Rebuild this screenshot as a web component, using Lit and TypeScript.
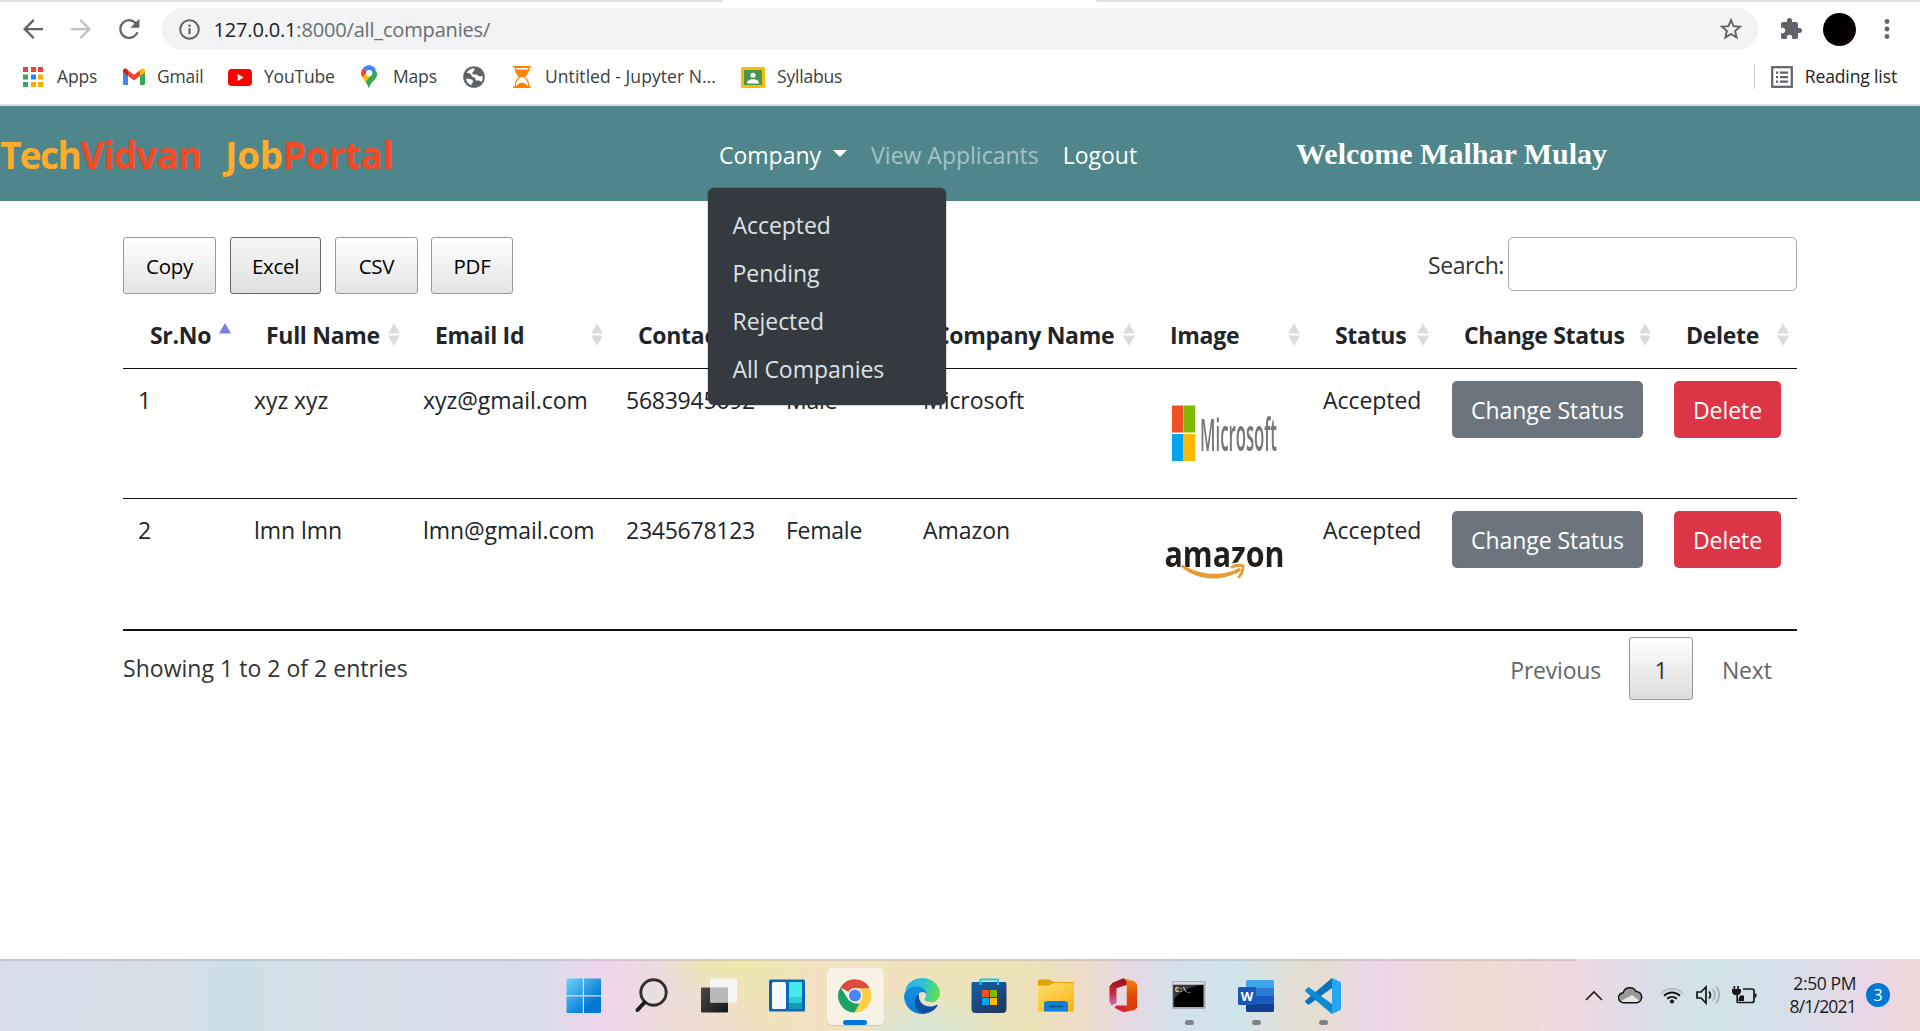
import { LitElement, html, svg, css } from "lit";
import { customElement } from "lit/decorators.js";
import { classMap } from "lit/directives/class-map.js";

interface Company {
  no: number;
  name: string;
  email: string;
  contact: string;
  gender: string;
  company: string;
  status: string;
  logo: unknown;
}

const backIcon = svg`<svg class="nav-icon" viewBox="0 0 24 24" fill="#5f6368"><path d="M20 11.1H7.6l5.7-5.7L12 4l-8 8 8 8 1.3-1.3-5.7-5.8H20z"/></svg>`;
const forwardIcon = svg`<svg class="nav-icon" viewBox="0 0 24 24" fill="#bdc1c6"><path d="M4 11.1h12.4l-5.7-5.7L12 4l8 8-8 8-1.3-1.3 5.7-5.8H4z"/></svg>`;
const reloadIcon = svg`<svg class="nav-icon" viewBox="0 0 24 24" fill="#5f6368"><path d="M17.65 6.35A7.96 7.96 0 0 0 12 4a8 8 0 1 0 7.7 10.6h-1.95A6.2 6.2 0 1 1 12 5.8c1.7 0 3.2.7 4.3 1.9L13 11h7.3V3.7z"/></svg>`;

const bookmarks = [
  {
    label: "Apps",
    icon: svg`<svg width="22" height="22" viewBox="0 0 22 22">
      <path fill="#ea4335" d="M0 1h5v5H0zM8 1h5v5H8zM15 1h5v5h-5z"/>
      <path fill="#34a853" d="M0 8.500h5v5H0zM0 16h5v5H0z"/>
      <path fill="#1a8cff" d="M8 8.500h5v5H8z"/>
      <path fill="#fbab0a" d="M15 8.500h5v5h-5zM8 16h5v5H8zM15 16h5v5h-5z"/></svg>`,
  },
  {
    label: "Gmail",
    icon: svg`<svg width="22" height="18" viewBox="0 0 22 18">
      <path fill="#4285f4" d="M0 4v11.500A1.500 1.500 0 0 0 1.500 17H5V7.500z"/>
      <path fill="#34a853" d="M22 4v11.500a1.500 1.500 0 0 1-1.500 1.500H17V7.500z"/>
      <path fill="#ea4335" d="M5 2.200l6 4.600 6-4.600V8l-6 4.500L5 8z"/>
      <path fill="#c5221f" d="M0 2.800C0 .8 2.200-.1 3.700 1L5 2.200V8L0 4.300z"/>
      <path fill="#fbbc04" d="M22 2.800C22 .8 19.800-.1 18.300 1L17 2.200V8l5-3.700z"/></svg>`,
  },
  {
    label: "YouTube",
    icon: svg`<svg width="24" height="17" viewBox="0 0 24 17"><rect width="24" height="17" rx="3.800" fill="#f00"/><path fill="#fff" d="M9.700 5l6 3.500-6 3.500z"/></svg>`,
  },
  {
    label: "Maps",
    icon: svg`<svg width="20" height="24" viewBox="0 0 20 24">
      <path fill="#34a853" d="M8 23.500c-.5 0-.8-3.200-3.600-6.700L14 4.500A8.300 8.300 0 0 1 16.200 8.700c0 6.300-7.200 8-8.200 14.800z"/>
      <path fill="#fbbc04" d="M4.400 16.800C2.700 14.600 1 12.600.4 10.300L6 6l4.800 4z"/>
      <path fill="#ea4335" d="M.4 10.300C-.3 7.500.4 4.800 2.200 2.900L6.200 6.400 1.800 11.700z"/>
      <path fill="#4285f4" d="M8 .2c2.700 0 5 1.400 6.700 3.700L10.700 9 6.200 6.400l-4-3.500C3.700 1.200 5.700.2 8 .2z"/>
      <circle cx="8.200" cy="8.200" r="3.100" fill="#fff"/></svg>`,
  },
  {
    label: "",
    icon: svg`<svg width="22" height="22" viewBox="0 0 22 22"><circle cx="11" cy="11" r="10.800" fill="#5f6368"/>
      <path fill="#fff" d="M11.500 2.400c-3.500-.2-6.500 1.700-8 4.600 1.700-.2 3.300.1 4.300 1.100 1 1.100.5 2.600 2 2.900 1.700.3 2.700.6 2.700 2.400 0 1.400 1.200 1.200 2.700 1.200 1.300 0 2.300.6 3 1.400 1.300-1.700 1.800-3.800 1.400-6-1.600-.1-2.400.9-3.700 0-1.300-.8-2.400-1.600-4.200-1.400-1.400.2-2.400-.5-2.300-1.700.1-1.600 2.500-1.400 2.100-4.500zM3 12.500c.4 3 2.400 5.800 5.600 6.800l.1-2.200c1.200-.3 1.700-1.200 1.300-2.300-.4-1.200-2-1.800-3.700-1.900z"/></svg>`,
  },
  {
    label: "Untitled - Jupyter N...",
    icon: svg`<svg width="20" height="22" viewBox="0 0 20 22">
      <path fill="#ff8000" d="M0 0h18v1.600H0zM0 20.400h18V22H0z"/>
      <path fill="#fff" stroke="#ff8000" stroke-width="1.200" d="M2.300 1.500c0 5 1.200 7.300 4.800 9.500-3.600 2.200-4.800 4.500-4.800 9.500h13.400c0-5-1.200-7.300-4.800-9.500 3.600-2.200 4.800-4.500 4.800-9.500z"/>
      <path fill="#ff8000" d="M3 3.500h12c-.5 3.700-2 5.700-5 7.500H8C5 9.200 3.500 7.200 3 3.500zM3.200 20.300c1.500-2.200 3-3.500 5.800-3.500s4.300 1.300 5.800 3.500z"/></svg>`,
  },
  {
    label: "Syllabus",
    icon: svg`<svg width="24" height="21" viewBox="0 0 24 21"><rect width="24" height="21" rx="1.500" fill="#fbbc04"/>
      <rect x="3" y="3" width="18" height="15" fill="#4a9550"/><circle cx="12" cy="8.200" r="2.500" fill="#fff"/>
      <path fill="#fff" d="M6 16.500c0-3 3-4.300 6-4.300s6 1.300 6 4.300z"/></svg>`,
  },
];

const microsoftLogo = svg`<svg class="logo" viewBox="0 0 135 104">
  <rect x="14" y="24.500" width="11.500" height="27" fill="#f25022"/><rect x="26" y="24.500" width="11.300" height="27" fill="#7fba00"/>
  <rect x="14" y="53" width="11.500" height="27" fill="#00a4ef"/><rect x="26" y="53" width="11.300" height="27" fill="#ffb900"/>
  <text class="ms-name" x="42" y="69.500" textLength="77" lengthAdjust="spacingAndGlyphs">Microsoft</text></svg>`;

const amazonLogo = svg`<svg class="logo" viewBox="0 0 135 104">
  <text class="amazon-name" x="6.500" y="56" textLength="120" lengthAdjust="spacingAndGlyphs">amazon</text>
  <path d="M23 55.500c16 15 44 16 60 3l-2-1.500c-15 8.500-39 8-56.500-3.500z" fill="#ea9a33"/>
  <path d="M72 56.500c4-2.500 9-3 13-2 .5 4-1.500 9-5 12.500" fill="none" stroke="#fff" stroke-width="5.500"/>
  <path d="M73 56.500c4-2.300 8.500-2.600 12-1.700.3 4-1.500 8.500-4.800 12" fill="none" stroke="#ea9a33" stroke-width="2.800"/>
  <path d="M76 61.500l6-4.500 1 2.500-5 3.500z" fill="#ea9a33"/></svg>`;

const companies: Company[] = [
  { no: 1, name: "xyz xyz", email: "xyz@gmail.com", contact: "5683945692", gender: "Male", company: "Microsoft", status: "Accepted", logo: microsoftLogo },
  { no: 2, name: "lmn lmn", email: "lmn@gmail.com", contact: "2345678123", gender: "Female", company: "Amazon", status: "Accepted", logo: amazonLogo },
];

const columns = ["Sr.No", "Full Name", "Email Id", "Contact", "Gender", "Company Name", "Image", "Status", "Change Status", "Delete"];

@customElement("browser-chrome")
class BrowserChrome extends LitElement {
  static styles = css`
    :host { display: block; background: #fff; border-bottom: 2px solid #dadce0; font-family: "Open Sans", "Noto Sans", sans-serif; }
    svg { display: block; flex: none; }
    .tabs { display: flex; justify-content: space-between; height: 2px; }
    .tab-edge { background: #dee1e6; }
    .tab-edge.left { width: 723px; border-bottom-right-radius: 2px; }
    .tab-edge.right { width: 824px; border-bottom-left-radius: 2px; }
    .toolbar { display: flex; align-items: center; height: 54px; padding-left: 18px; gap: 18px; }
    .nav-icon { width: 30px; height: 30px; }
    .address { display: flex; align-items: center; width: 1596px; height: 42px; padding: 0 15px 0 17px; box-sizing: border-box; border-radius: 21px; background: #f1f3f4; }
    .url { flex: 1; margin-left: 13.5px; padding-top: 1px; font-size: 20px; letter-spacing: -0.17px; line-height: 30px; color: #6a6e72; white-space: nowrap; }
    .host { color: #202124; }
    .actions { display: flex; align-items: center; margin-left: 3px; }
    .avatar { width: 33px; height: 33px; margin: 0 19px 0 20px; border-radius: 50%; background: linear-gradient(135deg, #000 55%, #190004); }
    .bookmarks { display: flex; align-items: center; height: 42px; padding: 0 23px 6px 23px; }
    .list { display: grid; grid-template-columns: 100px 105px 133px 102px 50px 228px auto; align-items: center; flex: 1; }
    .bookmark { display: flex; align-items: center; gap: 12px; }
    .label { font-size: 17.5px; line-height: 24px; letter-spacing: -0.18px; color: #3c4043; white-space: nowrap; padding-bottom: 2px; }
    .label.wide { letter-spacing: 0.05px; }
    .reading { display: flex; align-items: center; height: 24px; padding-left: 16px; gap: 12px; border-left: 1px solid #ccc; }
    .reading .label { color: #202124; letter-spacing: -0.12px; }
  `;

  render() {
    return html`
      <div class="tabs"><div class="tab-edge left"></div><div class="tab-edge right"></div></div>
      <div class="toolbar">
        ${backIcon}${forwardIcon}${reloadIcon}
        <div class="address">
          <svg width="21" height="21" viewBox="0 0 21 21"><circle cx="10.500" cy="10.500" r="9.300" fill="none" stroke="#5f6368" stroke-width="2"/><path fill="#5f6368" d="M9.400 9.300h2.200v6H9.400zM9.400 5.500h2.200v2.200H9.400z"/></svg>
          <span class="url"><span class="host">127.0.0.1</span>:8000/all_companies/</span>
          <svg width="24" height="24" viewBox="0 0 24 24"><path fill="none" stroke="#5f6368" stroke-width="1.900" d="M12 3.200l2.500 6 6.500.6-4.900 4.200 1.500 6.400L12 17l-5.600 3.400L7.900 14 3 9.800l6.500-.6z"/></svg>
        </div>
        <div class="actions">
          <svg width="24" height="24" viewBox="0 0 24 24" fill="#5f6368"><path d="M20.500 11H19V7c0-1.100-.9-2-2-2h-4V3.500a2.500 2.500 0 0 0-5 0V5H4c-1.100 0-2 .9-2 2v3.800h1.500a2.700 2.700 0 0 1 0 5.400H2V20c0 1.100.9 2 2 2h3.800v-1.500a2.700 2.700 0 0 1 5.400 0V22H17c1.100 0 2-.9 2-2v-4h1.500a2.500 2.500 0 0 0 0-5z"/></svg>
          <div class="avatar"></div>
          <svg width="24" height="24" viewBox="0 0 24 24" fill="#5f6368"><circle cx="12" cy="4.500" r="2.400"/><circle cx="12" cy="12" r="2.400"/><circle cx="12" cy="19.500" r="2.400"/></svg>
        </div>
      </div>
      <div class="bookmarks">
        <div class="list">
          ${bookmarks.map((b) => html`<div class="bookmark">${b.icon}${b.label ? html`<span class=${classMap({ label: true, wide: b.label.length > 12 })}>${b.label}</span>` : null}</div>`)}
        </div>
        <div class="reading">
          <svg width="22" height="22" viewBox="0 0 22 22"><rect x="1.200" y="1.200" width="19.600" height="19.600" fill="none" stroke="#5f6368" stroke-width="2.200"/>
            <path fill="#5f6368" d="M5 5.500h2.200v2.200H5zM9 5.500h8v2.200H9zM5 10h2.200v2.200H5zM9 10h8v2.200H9zM5 14.500h2.200v2.200H5zM9 14.500h8v2.200H9z"/></svg>
          <span class="label">Reading list</span>
        </div>
      </div>
    `;
  }
}

@customElement("portal-navbar")
class PortalNavbar extends LitElement {
  static styles = css`
    :host { display: grid; grid-template-columns: 708px 588px 1fr; align-items: center; height: 95px; background: #4f868b; font-family: "Open Sans", "Noto Sans", sans-serif; }
    .brand { display: flex; gap: 24px; padding-top: 2px; font-size: 37px; line-height: 50px; font-weight: 700; white-space: nowrap; color: #ffac2d; letter-spacing: -0.4px; }
    .tech { letter-spacing: -1.6px; }
    .accent { color: #f34b26; letter-spacing: -0.3px; }
    .vidvan { letter-spacing: -0.9px; }
    .links { display: flex; gap: 24px; padding-left: 11px; padding-top: 2px; font-size: 23px; line-height: 36px; letter-spacing: 0; color: #fff; white-space: nowrap; }
    .dropdown { position: relative; display: flex; align-items: center; gap: 12px; }
    .caret { border: 7px solid transparent; border-top-color: #fff; border-bottom: 0; margin-bottom: 3px; }
    .muted { color: rgba(255, 255, 255, 0.5); }
    .menu { position: absolute; top: 51px; left: -11px; z-index: 2; width: 238px; padding: 13px 0 12px; box-sizing: border-box; border-radius: 6px; background: #343a40; box-shadow: 0 0 0 1px rgba(0, 0, 0, 0.15); }
    .item { padding: 0 24.5px; line-height: 48px; color: #dee2e6; letter-spacing: -0.05px; }
    .welcome { font: 700 30px/40px "Liberation Serif", serif; color: #fff; white-space: nowrap; }
  `;

  render() {
    return html`
      <div class="brand">
        <span><span class="tech">Tech</span><span class="accent vidvan">Vidvan</span></span>
        <span>Job<span class="accent">Portal</span></span>
      </div>
      <div class="links">
        <div class="dropdown">
          <span>Company</span><span class="caret"></span>
          <div class="menu">
            ${["Accepted", "Pending", "Rejected", "All Companies"].map((t) => html`<div class="item">${t}</div>`)}
          </div>
        </div>
        <span class="muted">View Applicants</span>
        <span>Logout</span>
      </div>
      <div class="welcome">Welcome Malhar Mulay</div>
    `;
  }
}

@customElement("company-table")
class CompanyTable extends LitElement {
  static styles = css`
    :host { display: block; padding: 36px 123px 0; font: 23px/36px "Open Sans", "Noto Sans", sans-serif; letter-spacing: -0.05px; color: #212529; }
    svg { display: block; }
    .tools { display: flex; height: 57px; }
    .export { height: 57px; margin-right: 14px; box-sizing: border-box; border: 1px solid #999; border-radius: 3px; background: linear-gradient(#fff, #e4e4e4); font-size: 20.5px; line-height: 56px; text-align: center; color: #000; letter-spacing: -0.3px; }
    .export.copy { width: 93px; }
    .export.excel { width: 91px; border-color: #666; background: linear-gradient(#f6f6f6, #e0e0e0); }
    .export.csv { width: 83px; margin-right: 13px; }
    .export.pdf { width: 82px; }
    .search { display: flex; align-items: flex-start; gap: 4px; margin-left: auto; line-height: 57px; color: #333; letter-spacing: -0.4px; }
    .field { width: 289px; height: 54px; box-sizing: border-box; border: 1px solid #aaa; border-radius: 5px; }
    .row { display: grid; grid-template-columns: 116px 169px 203px 160px 137px 235px 165px 129px 222px 138px; white-space: nowrap; }
    .head { height: 75px; box-sizing: border-box; border-bottom: 1px solid #111; font-weight: 700; letter-spacing: -0.3px; }
    .title { display: flex; justify-content: space-between; padding: 23px 8.5px 0 27px; }
    .title svg { margin-top: 6px; }
    .body { height: 129px; }
    .body + .body { height: 131px; box-sizing: border-box; border-top: 1px solid #111; }
    .last { border-bottom: 2px solid #111; }
    .cell { padding: 13px 15px 0; }
    .tight { letter-spacing: -0.25px; }
    .media { padding-top: 12px; }
    .logo { width: 135px; height: 104px; filter: blur(0.4px); }
    .ms-name { font: 600 46px "Open Sans", sans-serif; fill: #777; }
    .amazon-name { font: 700 36px "Open Sans", sans-serif; fill: #221f1a; }
    .btn { height: 57px; border-radius: 5px; font-size: 23px; line-height: 59px; text-align: center; color: #fff; }
    .btn.change { width: 191px; background: #6c757d; }
    .btn.delete { width: 107px; background: #dc3545; }
    .foot { display: flex; justify-content: space-between; color: #333; }
    .info { padding-top: 19px; letter-spacing: 0.03px; }
    .pages { display: flex; align-items: flex-start; padding-top: 6px; line-height: 67px; color: #666; letter-spacing: -0.2px; }
    .page { width: 64px; height: 63px; margin: 0 29px 0 28px; box-sizing: border-box; border: 1px solid #979797; border-radius: 3px; background: linear-gradient(#fff, #dcdcdc); text-align: center; color: #333; line-height: 65px; }
    .next { width: 75px; }
  `;

  private sorter(active: boolean) {
    return active
      ? html`<svg width="12" height="23" viewBox="0 0 12 23"><path fill="#7b80e0" d="M6 0l6 10.500H0z"/></svg>`
      : html`<svg width="12" height="23" viewBox="0 0 12 23"><path fill="#dcdcdc" d="M6 0l6 10.500H0zM6 23l6-10.500H0z"/></svg>`;
  }

  render() {
    return html`
      <div class="tools">
        ${["Copy", "Excel", "CSV", "PDF"].map((t) => html`<div class=${classMap({ export: true, [t.toLowerCase()]: true })}>${t}</div>`)}
        <div class="search"><span>Search:</span><div class="field"></div></div>
      </div>
      <div class="row head">
        ${columns.map((c, i) => html`<div class="title"><span>${c}</span>${this.sorter(i === 0)}</div>`)}
      </div>
      <div class="last">
        ${companies.map(
          (c) => html`<div class="row body">
            <div class="cell">${c.no}</div>
            <div class="cell">${c.name}</div>
            <div class="cell">${c.email}</div>
            <div class="cell tight">${c.contact}</div>
            <div class="cell tight">${c.gender}</div>
            <div class="cell">${c.company}</div>
            <div class="cell media">${c.logo}</div>
            <div class="cell">${c.status}</div>
            <div class="cell media"><div class="btn change">Change Status</div></div>
            <div class="cell media"><div class="btn delete">Delete</div></div>
          </div>`,
        )}
      </div>
      <div class="foot">
        <div class="info">Showing 1 to 2 of 2 entries</div>
        <div class="pages"><span>Previous</span><div class="page">1</div><span class="next">Next</span></div>
      </div>
    `;
  }
}

const taskIcons = [
  { name: "start", running: false, icon: svg`<svg viewBox="0 0 36 36">
      <defs><linearGradient id="s" gradientUnits="userSpaceOnUse" x1="0" y1="0" x2="35" y2="35"><stop offset="0" stop-color="#6fd6ff"/><stop offset=".75" stop-color="#0078d4"/></linearGradient></defs>
      <path fill="url(#s)" d="M1.500.500h15.300v16.800H.500V1.500a1 1 0 0 1 1-1zM18 .500h16a1 1 0 0 1 1 1v15.800H18zM.500 18.500h16.300V35H1.500a1 1 0 0 1-1-1zM18 18.500h17V34a1 1 0 0 1-1 1H18z"/></svg>` },
  { name: "search", running: false, icon: svg`<svg viewBox="0 0 36 36"><circle cx="20.500" cy="14.500" r="12.700" fill="#e9dfe0" stroke="#2f2f2f" stroke-width="2.900"/><path d="M11.500 24.500L4.500 32" stroke="#1c1c1c" stroke-width="4" stroke-linecap="round"/></svg>` },
  { name: "taskview", running: false, icon: svg`<svg viewBox="0 0 36 36">
      <defs><linearGradient id="d" x1="0" y1="0" x2="1" y2="1"><stop offset="0" stop-color="#4b4b4b"/><stop offset="1" stop-color="#151515"/></linearGradient></defs>
      <rect y="9.500" width="27" height="25" rx="1" fill="url(#d)"/><rect x="9" y=".500" width="27" height="24" rx="1" fill="#f7f7f7"/><path fill="#b9b9b9" d="M9 9.500h18v15H9z"/></svg>` },
  { name: "widgets", running: false, icon: svg`<svg viewBox="0 0 36 36"><rect y="1.500" width="36" height="32" rx="1.500" fill="#0a66b7"/><rect x="3" y="4" width="14" height="27" rx="1.500" fill="#f6f9fc"/>
      <path fill="#45eaec" d="M20 4h13v15H20z"/><path fill="#2cccd8" d="M20 19h13v6H20z"/><path fill="#139bb3" d="M20 25h13v6H20z"/></svg>` },
  { name: "chrome", running: false, icon: svg`<svg viewBox="0 0 36 36">
      <path fill="#dc4b3e" d="M18 17.500L3.500 9.600a16.600 16.600 0 0 1 29.300.9H18z"/>
      <path fill="#ffcd41" d="M18 10.500h14.800A16.600 16.600 0 0 1 17.500 34.500L25 21z"/>
      <path fill="#1da261" d="M3.600 9.200L11.600 22 18 25.500h4.500l-5 9A16.600 16.600 0 0 1 3.600 9.200z"/>
      <circle cx="18" cy="17.500" r="7.600" fill="#f1f1f1"/><circle cx="18" cy="17.500" r="6" fill="#4b86f5"/></svg>` },
  { name: "edge", running: false, icon: svg`<svg viewBox="0 0 36 36">
      <defs><linearGradient id="e1" x1="0" y1=".3" x2="1" y2=".5"><stop offset="0" stop-color="#2aaef0"/><stop offset=".5" stop-color="#2bc3d2"/><stop offset="1" stop-color="#66e04f"/></linearGradient>
      <linearGradient id="e2" x1="0" y1="0" x2="0" y2="1"><stop offset="0" stop-color="#1490df"/><stop offset="1" stop-color="#0a7bd8"/></linearGradient></defs>
      <path fill="url(#e1)" d="M.8 13C3 5 10 0 18.200 0 28.500 0 36 7.200 36 15.500c0 5-3.700 8.800-8.700 8.800-4.800 0-6.700-1.700-6.700-3.200 0-1 1.600-1.600 1.600-4.600 0-3.500-4-7-9.700-7C7 9.500 2.500 11 .8 13z"/>
      <path fill="url(#e2)" d="M.1 19.500C-.5 12 6.500 8.300 12.500 8.300c6 0 10.300 4 9.900 8.700-.3-1.800-2-3-4.200-3-3 0-5.200 3-5.200 6.500 0 7 5 12 11.500 13-2 1.500-4.500 2.400-7 2.400C8 35.800.700 28.500.1 19.500z"/>
      <path fill="#124f9f" d="M15 16c-2.500 1.200-4 4.500-4 8 0 5 3.500 10.500 8.500 11.700 6.500-.2 11.500-3.900 13.900-7.800.5-.9-.2-1.400-1-.9-1.800.9-4 1.500-6.200 1.500C19 28.500 14 23 15 16z"/></svg>` },
  { name: "store", running: false, icon: svg`<svg viewBox="0 0 36 36">
      <defs><linearGradient id="b" x1="0" y1="0" x2=".6" y2="1"><stop offset="0" stop-color="#0f62ad"/><stop offset="1" stop-color="#213a63"/></linearGradient></defs>
      <path fill="url(#b)" d="M.5 5.500A1.500 1.500 0 0 1 2 4h32a1.500 1.500 0 0 1 1.500 1.500V31a4 4 0 0 1-4 4h-27a4 4 0 0 1-4-4z"/>
      <path fill="none" stroke="#1cc4f5" stroke-width="2" d="M9.500 7V1.500h17.500V7"/>
      <path fill="#f25022" d="M11 12h7v7h-7z"/><path fill="#7fba00" d="M19 12h7v7h-7z"/><path fill="#00a4ef" d="M11 20h7v7h-7z"/><path fill="#ffb900" d="M19 20h7v7h-7z"/></svg>` },
  { name: "files", running: false, icon: svg`<svg viewBox="0 0 36 36">
      <defs><linearGradient id="f" x1="0" y1="0" x2=".7" y2="1"><stop offset="0" stop-color="#ffdf70"/><stop offset="1" stop-color="#fbb716"/></linearGradient></defs>
      <path fill="#e0a106" d="M0 3a1.500 1.500 0 0 1 1.500-1.500h10L15.500 4H35a1 1 0 0 1 1 1v6H0z"/><path fill="url(#f)" d="M0 7.500h11L16 5h20v27.500a1 1 0 0 1-1 1H1a1 1 0 0 1-1-1z"/>
      <path fill="#1080d4" d="M6 33.500V26a3 3 0 0 1 3-3h18a3 3 0 0 1 3 3v7.500z"/><path stroke="#0a5396" stroke-width="1.600" d="M11 28.500h14"/></svg>` },
  { name: "office", running: false, icon: svg`<svg viewBox="0 0 36 36">
      <defs><linearGradient id="o" x1="0" y1="0" x2="0" y2="1"><stop offset="0" stop-color="#f08a10"/><stop offset=".5" stop-color="#e04a08"/><stop offset="1" stop-color="#d63a05"/></linearGradient>
      <linearGradient id="p" x1="0" y1="0" x2="0" y2="1"><stop offset="0" stop-color="#8f1016"/><stop offset=".5" stop-color="#c52638"/><stop offset="1" stop-color="#c96ab8"/></linearGradient></defs>
      <path fill="url(#o)" d="M18.500.300L29.500 3.300 32 6v24l-2.500 2-11 2.300 3.300-4.500V6z"/>
      <path fill="url(#p)" d="M18.500.3L7.500 4.700 4.500 8.500v15l2 4 5-2.500V10.300L21.800 7V4z"/><path fill="#d91e36" d="M9.500 29.800L11 27.500h10.800v4l-3.300 2.800z"/></svg>` },
  { name: "cmd", running: true, icon: svg`<svg viewBox="0 0 36 36"><rect x="1" y="3" width="33.500" height="28" rx="1" fill="#a9adb8"/><path fill="#d8dbe2" d="M2 4h31v2H2z"/><path fill="#000" d="M2.500 7h30v22h-30z"/>
      <path fill="#3c3c3c" d="M2.500 7h27C20 9 8 13 2.500 22z"/><text class="prompt" x="4" y="14">C:\\_</text></svg>` },
  { name: "word", running: true, icon: svg`<svg viewBox="0 0 36 36"><path fill="#41a5ee" d="M9 2h25.500A1.500 1.500 0 0 1 36 3.500V10H8V3.500z"/><path fill="#2b7cd3" d="M8 10h28v8H8z"/><path fill="#185abd" d="M8 18h28v8H8z"/><path fill="#103f91" d="M8 26h28v6.500a1.500 1.500 0 0 1-1.500 1.500h-25A1.500 1.500 0 0 1 8 32.500z"/>
      <rect x="0" y="9" width="18" height="18" rx="1.500" fill="#1a56b8"/><text class="word" x="9" y="22.500" text-anchor="middle">W</text></svg>` },
  { name: "vscode", running: true, icon: svg`<svg viewBox="0 0 36 36"><path fill="#0c70b8" d="M27 0v10L3.500 27 .7 24.500a1.500 1.500 0 0 1 0-2.300z"/><path fill="#0b8ad6" d="M27 36V26L3.500 9 .7 11.500a1.500 1.500 0 0 0 0 2.300z"/><path fill="#26a5f2" d="M27 0l8 3.700a1.600 1.600 0 0 1 1 1.400v25.800a1.600 1.600 0 0 1-1 1.400L27 36l-1.500-1 1.500-1z"/></svg>` },
];

@customElement("task-bar")
class TaskBar extends LitElement {
  static styles = css`
    :host {
      display: flex; box-sizing: border-box; height: 72px; font-family: "Open Sans", "Noto Sans", sans-serif;
      background:
        radial-gradient(90px 40px at 925px 70px, #d6e8d8, transparent),
        radial-gradient(80px 50px at 735px 0, #efe7a8, transparent),
        radial-gradient(70px 45px at 700px 72px, #efdcd0, transparent),
        linear-gradient(90deg, #d8dde9 0, #d6dfe8 180px, #cbe0e6 225px, #d5dfe8 330px, #dadcea 540px, #efd6ec 600px, #ecdcd8 690px, #efe3bc 750px, #f2e1c4 840px, #eee2b8 960px, #ece2b8 1030px, #eedccb 1090px, #e6d8e6 1130px, #d2e2ea 1180px, #d0e4ec 1240px, #e2dfd2 1290px, #e6dcd2 1330px, #edd6ec 1370px, #eedccf 1470px, #efd8e2 1580px, #dcdce8 1640px, #cee4e8 1700px, #d8dfea 1800px, #ead6e6 1870px, #f0d8d8 1920px);
    }
    svg { display: block; flex: none; }
    .apps { display: flex; align-items: flex-start; width: 1576px; box-sizing: border-box; padding: 7px 0 0 555px; border-top: 2px solid rgba(120, 120, 130, 0.2); gap: 9.8px; }
    .app { display: flex; flex-direction: column; align-items: center; justify-content: space-between; width: 57px; height: 57px; padding-top: 10px; box-sizing: border-box; border-radius: 5px; }
    .app:nth-child(-n + 4) { margin-right: 1.2px; }
    .app svg { width: 36px; height: 36px; }
    .active { background: rgba(250, 247, 240, 0.75); box-shadow: 0 1px 1px rgba(0, 0, 0, 0.12); }
    .mark { width: 9px; height: 5px; border-radius: 3px; background: #7f8287; }
    .active .mark { width: 24px; background: #0078d7; }
    .prompt { font: 700 6.500px "Liberation Mono", monospace; fill: #eee; }
    .word { font: 700 13px "Open Sans", sans-serif; fill: #fff; }
    .tray { display: flex; align-items: center; padding-left: 9px; }
    .chevron { margin-right: 15px; }
    .cloud { margin-right: 17px; }
    .wifi { margin-right: 12px; }
    .volume { margin-right: 11px; }
    .battery { margin-right: 15px; }
    .clock { width: 84px; text-align: right; font-size: 17.5px; line-height: 23px; letter-spacing: -0.4px; color: #1a1a1a; white-space: nowrap; }
    .clock .date { letter-spacing: -0.8px; }
    .badge { width: 24px; height: 24px; margin-left: 10px; border-radius: 50%; background: #0078d4; color: #fff; font-size: 16px; line-height: 24px; text-align: center; }
  `;

  render() {
    return html`
      <div class="apps">
        ${taskIcons.map((t) => html`<div class=${classMap({ app: true, active: t.name === "chrome" })}>${t.icon}${t.running || t.name === "chrome" ? html`<span class="mark"></span>` : null}</div>`)}
      </div>
      <div class="tray">
        <svg class="chevron" width="18" height="11" viewBox="0 0 18 11"><path d="M1 10l8-8 8 8" fill="none" stroke="#1a1a1a" stroke-width="1.600"/></svg>
        <svg class="cloud" width="25" height="18" viewBox="0 0 25 18"><path d="M6 16.500a5 5 0 0 1-.8-9.800A7 7 0 0 1 18 5.500a5.600 5.600 0 0 1 1 11z" fill="#999"/><path fill="#e6e6e6" d="M3 15l11-6 8 6-3 1.500H6z"/><path fill="none" stroke="#111" stroke-width="1.500" d="M6 16.700a5 5 0 0 1-.8-10A7 7 0 0 1 18 5.400a5.700 5.700 0 0 1 1 11.300z"/></svg>
        <svg class="wifi" width="24" height="18" viewBox="0 0 24 18" fill="none" stroke-width="1.600"><path stroke="#b3b9be" d="M1 7.500a15.500 15.500 0 0 1 22 0"/><path stroke="#161616" stroke-width="1.900" d="M4 9.800a11.500 11.500 0 0 1 16 0M7.200 12.800a7 7 0 0 1 9.600 0"/><circle cx="12" cy="15.500" r="2.100" fill="#161616"/></svg>
        <svg class="volume" width="25" height="20" viewBox="0 0 25 20" fill="none" stroke="#161616" stroke-width="1.700"><path d="M1 7h4l5-5v16l-5-5H1z"/><path d="M13 6.500a5.500 5.500 0 0 1 0 7"/><path stroke="#a9adb3" d="M16.500 4a9 9 0 0 1 0 12M20 1.500a13 13 0 0 1 0 17"/></svg>
        <svg class="battery" width="25" height="20" viewBox="0 0 25 20"><path fill="#161616" d="M1.500 1h1.700v3h2V1h1.700v3H9v2.500a3.500 3.500 0 0 1-3 3.400V18H4.400V10A3.500 3.500 0 0 1 0 6.500V4h1.500zM8 10.500h4V16H6.500v-2zM22.500 8.500h1a1 1 0 0 1 1 1v2a1 1 0 0 1-1 1h-1z"/><path fill="none" stroke="#161616" stroke-width="1.700" d="M11 4h9a2 2 0 0 1 2 2v9.500a2 2 0 0 1-2 2H6"/></svg>
        <div class="clock"><div>2:50 PM</div><div class="date">8/1/2021</div></div>
        <div class="badge">3</div>
      </div>
    `;
  }
}

@customElement("app-root")
class AppRoot extends LitElement {
  static styles = css`
    :host { display: flex; flex-direction: column; height: 1031px; overflow: hidden; background: #fff; }
    portal-navbar { flex: none; }
    company-table { flex: 1; }
  `;

  render() {
    return html`<browser-chrome></browser-chrome><portal-navbar></portal-navbar><company-table></company-table><task-bar></task-bar>`;
  }
}
